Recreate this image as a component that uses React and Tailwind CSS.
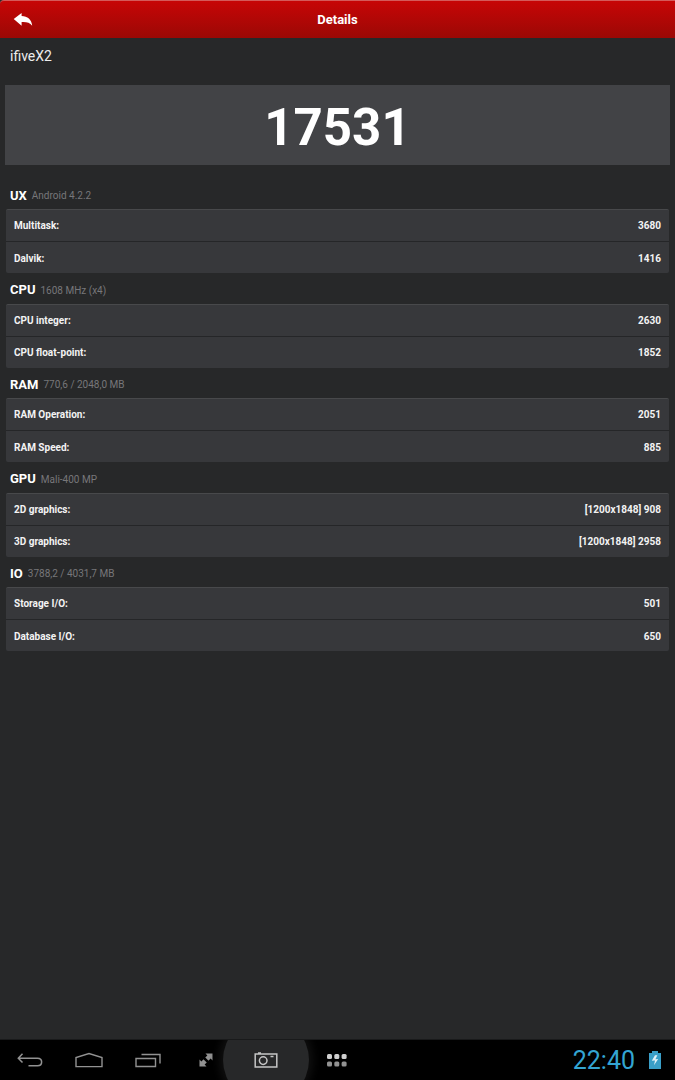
import React from 'react';

const sections = [
  { title: 'UX', info: 'Android 4.2.2', rows: [['Multitask:', '3680'], ['Dalvik:', '1416']] },
  { title: 'CPU', info: '1608 MHz (x4)', rows: [['CPU integer:', '2630'], ['CPU float-point:', '1852']] },
  { title: 'RAM', info: '770,6 / 2048,0 MB', rows: [['RAM Operation:', '2051'], ['RAM Speed:', '885']] },
  { title: 'GPU', info: 'Mali-400 MP', rows: [['2D graphics:', '[1200x1848] 908'], ['3D graphics:', '[1200x1848] 2958']] },
  { title: 'IO', info: '3788,2 / 4031,7 MB', rows: [['Storage I/O:', '501'], ['Database I/O:', '650']] },
];

function Header() {
  return (
    <header className="grid h-[38px] shrink-0 grid-cols-[1fr_auto_1fr] items-center rounded-tl border-t border-[#d45a5a] bg-linear-to-b from-[#c70506] to-[#9b0805]">
      <button type="button" aria-label="Back" className="flex h-full w-[46px] items-center pl-[13px]">
        <svg width="20" height="14" viewBox="0 0 20 14" fill="#fff" aria-hidden="true">
          <path d="M0.7 6.1 8.6 0V3.1C14.5 3.1 18.6 6.8 19.2 12.7 16.8 9.7 13.5 8.8 8.6 9.1V12.8Z" />
        </svg>
      </button>
      <h1 className="text-[13px] font-bold text-white">Details</h1>
    </header>
  );
}

function Section({ title, info, rows }) {
  return (
    <section>
      <div className="flex h-[30px] items-center gap-[5px] pt-[3px] pl-[10px]">
        <h2 className="text-[13px] font-bold text-white">{title}</h2>
        <span className="text-[10px] text-[#77777a]">{info}</span>
      </div>
      <dl className="mx-[6px] h-16 divide-y divide-[#252628] overflow-hidden rounded-xs border-t border-[#48494b] bg-[#37383b]">
        {rows.map(([name, value]) => (
          <div key={name} className="flex h-8 items-center justify-between px-2 text-[10px] font-bold text-[#f3f3f3]">
            <dt>{name}</dt>
            <dd>{value}</dd>
          </div>
        ))}
      </dl>
    </section>
  );
}

function NavBar() {
  return (
    <nav className="flex h-[41px] shrink-0 items-center overflow-hidden border-t border-[#191a1b] bg-black">
      <button type="button" aria-label="Back" className="flex w-[59px] justify-center">
        <svg width="26" height="16" viewBox="0 0 26 16" fill="none" stroke="#929292" strokeWidth="1.5" aria-hidden="true">
          <path d="M5.5 1.8 1.3 6.2 5.5 10.6M1.5 6.2H20.5C26 6.2 26 13.8 20.5 13.8H11.5" />
        </svg>
      </button>
      <button type="button" aria-label="Home" className="flex w-[59px] justify-center">
        <svg width="28" height="16" viewBox="0 0 28 16" fill="none" stroke="#929292" strokeWidth="1.4" aria-hidden="true">
          <path d="M1 14.6V5.6L14 1.5 27 5.6V14.6Z" />
        </svg>
      </button>
      <button type="button" aria-label="Recent apps" className="flex w-[59px] justify-center">
        <svg width="26" height="16" viewBox="0 0 26 16" fill="none" stroke="#929292" strokeWidth="1.4" aria-hidden="true">
          <path d="M1 6.5H20.5V14.5H1ZM6.5 2.5H25V11.5" />
        </svg>
      </button>
      <button type="button" aria-label="Resize" className="flex w-[46px] justify-center pl-[12px]">
        <svg width="14" height="14" viewBox="0 0 14 14" aria-hidden="true">
          <path d="M6.5 .5H13.5V7.5L11.6 5.6 9.4 7.8 6.2 4.6 8.4 2.4Z" fill="#929292" />
          <path d="M.5 6.5V13.5H7.5L5.6 11.6 7.8 9.4 4.6 6.2 2.4 8.4Z" fill="#929292" />
          <path d="M5.2 5.2 8.8 8.8" stroke="#000" strokeWidth="2" />
        </svg>
      </button>
      <button type="button" aria-label="Screenshot" className="flex size-[86px] shrink-0 items-center justify-center rounded-full bg-[#272829] shadow-[0_0_8px_4px_#101010]">
        <svg width="24" height="16" viewBox="0 0 24 16" fill="none" stroke="#c5c5c5" strokeWidth="1.5" aria-hidden="true">
          <path d="M1.2 2H22.8V15H1.2ZM4 1H7M16.5 4.5H19.5" />
          <circle cx="9.2" cy="8.6" r="3.8" />
        </svg>
      </button>
      <button type="button" aria-label="All apps" className="flex w-[56px] justify-center">
        <svg width="20" height="13" viewBox="0 0 20 13" aria-hidden="true">
          <g fill="#d0d0d0">
            <rect x="0" y="0" width="5" height="5" rx="1.5" />
            <rect x="7.3" y="0" width="5" height="5" rx="1.5" />
            <rect x="14.6" y="0" width="5" height="5" rx="1.5" />
          </g>
          <g fill="#929292">
            <rect x="0" y="7.5" width="5" height="5" rx="1.5" />
            <rect x="7.3" y="7.5" width="5" height="5" rx="1.5" />
            <rect x="14.6" y="7.5" width="5" height="5" rx="1.5" />
          </g>
        </svg>
      </button>
      <div className="ml-auto flex items-center gap-[14px] pr-[14px]">
        <time className="pt-[2px] text-[25px] leading-8 text-[#33a5d2]">22:40</time>
        <svg width="12" height="18" viewBox="0 0 12 18" role="img" aria-label="Battery charging">
          <path d="M0 2H3V0H9V2H12V18H0Z" fill="#3a9fc8" />
          <path d="M6 4.2 2.8 9.8 6 9.4 5 14.2 9.2 8 6.4 8.3 8.4 4.2Z" fill="#e3f2f8" />
        </svg>
      </div>
    </nav>
  );
}

export default function App() {
  return (
    <div className="flex min-h-screen flex-col bg-[#272829] font-['Roboto',sans-serif]">
      <Header />
      <main className="flex-1">
        <p className="flex h-[47px] items-start px-[10px] pt-2 text-sm text-[#ededed]">ifiveX2</p>
        <div className="mx-[5px] flex h-20 items-center justify-center bg-[#424346] pt-1 text-[51px] leading-none font-bold text-white">
          17531
        </div>
        <div className="mt-[14px] flex min-h-[472px] flex-col justify-between">
          {sections.map((section) => (
            <Section key={section.title} {...section} />
          ))}
        </div>
      </main>
      <NavBar />
    </div>
  );
}
